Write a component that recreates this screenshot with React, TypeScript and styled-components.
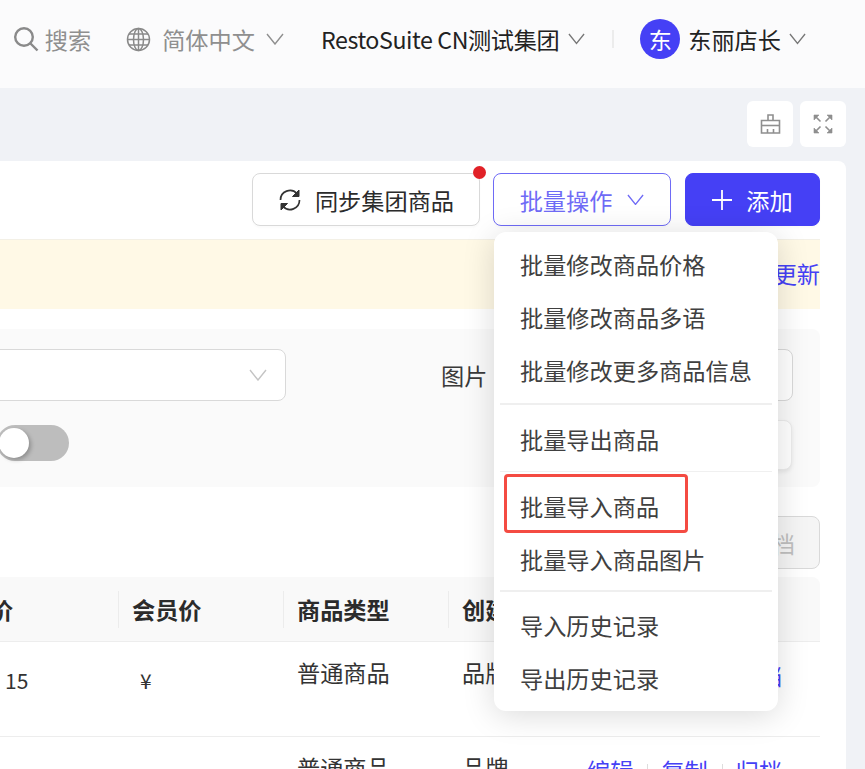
import React from 'react';
import styled, { createGlobalStyle } from 'styled-components';

const GlobalStyle = createGlobalStyle`
  html, body {
    margin: 0;
    padding: 0;
    background: #f0f2f6;
    font-family: "Noto Sans CJK SC", "Liberation Sans", sans-serif;
  }
`;

const Page = styled.div`
  position: relative;
  width: 865px;
  height: 769px;
  overflow: hidden;
  background: #f0f2f6;
`;

const Header = styled.header`
  display: flex;
  align-items: center;
  justify-content: flex-end;
  height: 88px;
  padding: 0 59px 10px 0;
  box-sizing: border-box;
  background: #fbfbfc;
  font-size: 23.2px;
  color: #222;
`;

const HeaderItem = styled.div<{ $muted?: boolean; $gap?: number; $inner?: number }>`
  display: flex;
  align-items: center;
  gap: ${(p) => p.$inner ?? 9}px;
  margin-right: ${(p) => p.$gap ?? 0}px;
  color: ${(p) => (p.$muted ? '#8f8f8f' : '#222')};
  white-space: nowrap;
`;

const GroupName = styled.span`
  letter-spacing: -0.4px;
`;

const HeaderDivider = styled.span`
  width: 2px;
  height: 18px;
  margin-right: 26px;
  background: #ececec;
`;

const Avatar = styled.span`
  display: flex;
  align-items: center;
  justify-content: center;
  width: 40px;
  height: 40px;
  border-radius: 50%;
  background: #4540f5;
  color: #fff;
  font-size: 23.2px;
`;

const ToolStrip = styled.div`
  display: flex;
  justify-content: flex-end;
  gap: 7px;
  height: 73px;
  padding: 13px 19px 0 0;
  box-sizing: border-box;
`;

const ToolButton = styled.button`
  display: flex;
  align-items: center;
  justify-content: center;
  width: 46px;
  height: 46px;
  padding: 0;
  border: none;
  border-radius: 6px;
  background: #fff;
  color: #8f8f8f;
`;

const Card = styled.main`
  width: 846px;
  height: 620px;
  padding-top: 12px;
  box-sizing: border-box;
  background: #fff;
  border-radius: 0 8px 0 0;
`;

const ActionRow = styled.div`
  display: flex;
  justify-content: flex-end;
  gap: 14px;
  height: 53px;
  padding-right: 26px;
`;

const Button = styled.button<{ $variant?: 'default' | 'outline' | 'primary'; $width: number; $gap: number }>`
  position: relative;
  display: flex;
  align-items: center;
  justify-content: center;
  gap: ${(p) => p.$gap}px;
  width: ${(p) => p.$width}px;
  height: 53px;
  padding: 0;
  box-sizing: border-box;
  border-radius: 8px;
  font-family: inherit;
  font-size: 23.2px;
  border: 1px solid
    ${(p) => (p.$variant === 'outline' ? '#6f6bf6' : p.$variant === 'primary' ? '#4540f5' : '#d9d9d9')};
  background: ${(p) => (p.$variant === 'primary' ? '#4540f5' : '#fff')};
  color: ${(p) => (p.$variant === 'outline' ? '#6f6bf6' : p.$variant === 'primary' ? '#fff' : '#2b2b2b')};
  box-shadow: 0 2px 2px rgba(0, 0, 0, 0.02);
  ${(p) => (p.$variant === 'outline' || p.$variant === 'primary' ? '' : 'margin-right: -1px;')}
`;

const RedDot = styled.span`
  position: absolute;
  top: -8px;
  right: -7px;
  width: 13px;
  height: 13px;
  border-radius: 50%;
  background: #e12127;
`;

const Notice = styled.div`
  display: flex;
  align-items: center;
  justify-content: flex-end;
  width: 820px;
  height: 70px;
  margin-top: 13px;
  padding-bottom: 4px;
  box-sizing: border-box;
  border-top: 1px solid #f3f0e6;
  background: #fff9e6;
  color: #4540f5;
  font-size: 23.2px;
`;

const FilterPanel = styled.section`
  display: grid;
  grid-template-columns: 286px 155px 46px 1fr;
  grid-template-rows: 52px 50px;
  row-gap: 19px;
  align-items: center;
  width: 820px;
  height: 158px;
  margin-top: 20px;
  padding: 20px 27px 0 0;
  box-sizing: border-box;
  background: #fafafa;
  border-radius: 0 8px 8px 0;
`;

const SelectBox = styled.div`
  display: flex;
  align-items: center;
  justify-content: flex-end;
  height: 52px;
  margin-left: -10px;
  padding-right: 18px;
  box-sizing: border-box;
  border: 1px solid #d9d9d9;
  border-radius: 8px;
  background: #fff;
  color: #c4c4c4;
`;

const FilterLabel = styled.span`
  grid-column: 3;
  font-size: 23.2px;
  line-height: 32px;
  color: #3a3a3a;
  white-space: nowrap;
`;

const FilterInput = styled.div<{ $raised?: boolean }>`
  grid-column: 4;
  height: ${(p) => (p.$raised ? 50 : 52)}px;
  margin: 0 ${(p) => (p.$raised ? 1 : 0)}px 0 16px;
  box-sizing: border-box;
  border: 1px solid ${(p) => (p.$raised ? '#ececec' : '#d9d9d9')};
  border-radius: 8px;
  background: #fff;
  box-shadow: ${(p) => (p.$raised ? '0 2px 4px rgba(0, 0, 0, 0.08)' : 'none')};
`;

const Toggle = styled.span`
  grid-column: 1;
  position: relative;
  display: block;
  width: 72px;
  height: 36px;
  margin: 0 0 4px -3px;
  border-radius: 18px;
  background: #bdbdbd;
`;

const ToggleKnob = styled.span`
  position: absolute;
  top: 3px;
  left: 2px;
  width: 30px;
  height: 30px;
  border-radius: 50%;
  background: #fff;
  box-shadow: 2px 2px 4px rgba(0, 0, 0, 0.25);
`;

const ArchiveRow = styled.div`
  display: flex;
  justify-content: flex-end;
  width: 820px;
  margin-top: 29px;
`;

const ArchiveButton = styled.button`
  width: 104px;
  height: 53px;
  padding: 0 24px 0 0;
  box-sizing: border-box;
  border: 1px solid #d9d9d9;
  border-radius: 8px;
  background: #f5f5f5;
  color: #bfbfbf;
  font-family: inherit;
  font-size: 23.2px;
  text-align: right;
`;

const Table = styled.div`
  width: 820px;
  margin-top: 8px;
  font-size: 23.2px;
  color: #333;
`;

const TableRow = styled.div<{ $head?: boolean }>`
  display: grid;
  grid-template-columns: 118px 165px 165px 124px 1fr;
  height: ${(p) => (p.$head ? 65 : 95)}px;
  box-sizing: border-box;
  border-bottom: 1px solid #ededed;
  background: ${(p) => (p.$head ? '#f9f9f9' : '#fff')};
  ${(p) => (p.$head ? 'border-radius: 0 8px 0 0; font-weight: 700; color: #2b2b2b;' : '')}
`;

const HeadCell = styled.div<{ $first?: boolean }>`
  align-self: center;
  height: 37px;
  line-height: 37px;
  padding-left: ${(p) => (p.$first ? 0 : 13)}px;
  border-left: ${(p) => (p.$first ? 'none' : '1px solid #ececec')};
  white-space: nowrap;
  overflow: hidden;
`;

const ClippedHead = styled.span`
  display: block;
  margin-left: -10px;
`;

const Cell = styled.div<{ $pad?: number; $offset?: number }>`
  padding: ${(p) => p.$offset ?? 14}px 0 0 ${(p) => p.$pad ?? 14}px;
  line-height: 32px;
  white-space: nowrap;
  overflow: hidden;
`;

const PriceCell = styled(Cell)`
  font-size: 21px;
`;

const Ops = styled.div`
  display: flex;
  align-items: flex-start;
  padding: 17px 0 0 15px;
  line-height: 32px;
  color: #4540f5;
  white-space: nowrap;
`;

const OpLink = styled.span`
  & + &::before {
    content: '';
    display: inline-block;
    width: 1px;
    height: 18px;
    margin: 0 13px 0 14px;
    vertical-align: -2px;
    background: #ddd;
  }
`;

const Menu = styled.ul`
  position: absolute;
  left: 494px;
  top: 232px;
  width: 284px;
  height: 479px;
  margin: 0;
  padding: 6px 6px 0;
  box-sizing: border-box;
  list-style: none;
  background: #fff;
  border-radius: 12px;
  box-shadow: 0 4px 32px rgba(0, 0, 0, 0.15);
`;

const MenuItem = styled.li`
  position: relative;
  height: 53px;
  padding-left: 20px;
  line-height: 53px;
  font-size: 23.2px;
  color: #404040;
  white-space: nowrap;
`;

const MenuDivider = styled.li<{ $thin?: boolean; $before: number; $after: number }>`
  height: ${(p) => (p.$thin ? 1 : 2)}px;
  margin: ${(p) => p.$before}px 0 ${(p) => p.$after}px;
  background: ${(p) => (p.$thin ? '#f0f0f0' : '#efefef')};
`;

const Highlight = styled.span`
  position: absolute;
  left: 4px;
  top: -6px;
  width: 184px;
  height: 59px;
  box-sizing: border-box;
  border: 3px solid #f44b42;
  border-radius: 4px;
`;

const Chevron = ({ size = 18, color = 'currentColor' }: { size?: number; color?: string }) => (
  <svg width={size} height={size * 0.67} viewBox="0 0 18 12" fill="none" stroke={color} strokeWidth="1.4">
    <path d="M1 1l8 10 8-10" />
  </svg>
);

const SearchIcon = () => (
  <svg width="26" height="26" viewBox="0 0 26 26" fill="none" stroke="#8a8a8a" strokeWidth="2.4">
    <circle cx="11" cy="11" r="8.8" />
    <path d="M17.5 17.5l7 7" />
  </svg>
);

const GlobeIcon = () => (
  <svg width="25" height="25" viewBox="0 0 25 25" fill="none" stroke="#8a8a8a" strokeWidth="1.5">
    <circle cx="12.5" cy="12.5" r="11" />
    <ellipse cx="12.5" cy="12.5" rx="5" ry="11" />
    <path d="M12.5 1.5v22M1.5 12.5h22M3 7h19M3 18h19" />
  </svg>
);

const SyncIcon = () => (
  <svg width="24" height="24" viewBox="0 0 24 24" fill="none" stroke="#333" strokeWidth="1.7">
    <path d="M2.5 12A9.5 9.5 0 0 1 19 5.6" />
    <path d="M21.5 12A9.5 9.5 0 0 1 5 18.4" />
    <path d="M21 2v6.5h-6.5z" fill="#333" strokeWidth="1" />
    <path d="M3 22v-6.5h6.5z" fill="#333" strokeWidth="1" />
  </svg>
);

const PlusIcon = () => (
  <svg width="20" height="20" viewBox="0 0 20 20" fill="none" stroke="#fff" strokeWidth="1.8">
    <path d="M10 0v20M0 10h20" />
  </svg>
);

const BroomIcon = () => (
  <svg width="21" height="20" viewBox="0 0 21 20" fill="none" stroke="currentColor" strokeWidth="1.6">
    <path d="M8 6.5V1h5v5.5" />
    <path d="M1.5 6.5h18V19h-18z" />
    <path d="M1.5 11.5h18" />
    <path d="M7.5 19v-4M13.5 19v-4" />
  </svg>
);

const ExpandIcon = () => (
  <svg width="20" height="20" viewBox="0 0 20 20" fill="currentColor" stroke="currentColor" strokeWidth="1.6">
    <path d="M1 1h5l-5 5z" strokeWidth="0.6" />
    <path d="M19 1h-5l5 5z" strokeWidth="0.6" />
    <path d="M1 19h5l-5-5z" strokeWidth="0.6" />
    <path d="M19 19h-5l5-5z" strokeWidth="0.6" />
    <path d="M3 3l4.5 4.5M17 3l-4.5 4.5M3 17l4.5-4.5M17 17l-4.5-4.5" fill="none" />
  </svg>
);

export default function App() {
  return (
    <Page>
      <GlobalStyle />
      <Header>
        <HeaderItem $muted $gap={35} $inner={6}>
          <SearchIcon />
          <span>搜索</span>
        </HeaderItem>
        <HeaderItem $muted $gap={37} $inner={11}>
          <GlobeIcon />
          <span>简体中文</span>
          <Chevron />
        </HeaderItem>
        <HeaderItem $gap={27}>
          <GroupName>RestoSuite CN测试集团</GroupName>
          <Chevron size={17} color="#777" />
        </HeaderItem>
        <HeaderDivider />
        <HeaderItem $inner={8}>
          <Avatar>东</Avatar>
          <span>东丽店长</span>
          <Chevron size={17} color="#777" />
        </HeaderItem>
      </Header>

      <ToolStrip>
        <ToolButton>
          <BroomIcon />
        </ToolButton>
        <ToolButton>
          <ExpandIcon />
        </ToolButton>
      </ToolStrip>

      <Card>
        <ActionRow>
          <Button $width={228} $gap={13}>
            <SyncIcon />
            同步集团商品
            <RedDot />
          </Button>
          <Button $variant="outline" $width={178} $gap={15}>
            批量操作
            <Chevron size={17} />
          </Button>
          <Button $variant="primary" $width={135} $gap={14}>
            <PlusIcon />
            添加
          </Button>
        </ActionRow>

        <Notice>更新</Notice>

        <FilterPanel>
          <SelectBox>
            <Chevron />
          </SelectBox>
          <span />
          <FilterLabel>图片</FilterLabel>
          <FilterInput />
          <Toggle>
            <ToggleKnob />
          </Toggle>
          <FilterInput $raised />
        </FilterPanel>

        <ArchiveRow>
          <ArchiveButton>归档</ArchiveButton>
        </ArchiveRow>

        <Table>
          <TableRow $head>
            <HeadCell $first>
              <ClippedHead>价</ClippedHead>
            </HeadCell>
            <HeadCell>会员价</HeadCell>
            <HeadCell>商品类型</HeadCell>
            <HeadCell>创建方式</HeadCell>
            <span />
          </TableRow>
          <TableRow>
            <PriceCell $pad={5} $offset={22}>15</PriceCell>
            <PriceCell $pad={22} $offset={22}>¥</PriceCell>
            <Cell>普通商品</Cell>
            <Cell>品牌</Cell>
            <Ops>
              <OpLink>编辑</OpLink>
              <OpLink>复制</OpLink>
              <OpLink>归档</OpLink>
            </Ops>
          </TableRow>
          <TableRow>
            <span />
            <span />
            <Cell>普通商品</Cell>
            <Cell>品牌</Cell>
            <Ops>
              <OpLink>编辑</OpLink>
              <OpLink>复制</OpLink>
              <OpLink>归档</OpLink>
            </Ops>
          </TableRow>
        </Table>
      </Card>

      <Menu>
        <MenuItem>批量修改商品价格</MenuItem>
        <MenuItem>批量修改商品多语</MenuItem>
        <MenuItem>批量修改更多商品信息</MenuItem>
        <MenuDivider $before={6} $after={8} />
        <MenuItem>批量导出商品</MenuItem>
        <MenuDivider $thin $before={5} $after={8} />
        <MenuItem>
          批量导入商品
          <Highlight />
        </MenuItem>
        <MenuItem>批量导入商品图片</MenuItem>
        <MenuDivider $before={4} $after={7} />
        <MenuItem>导入历史记录</MenuItem>
        <MenuItem>导出历史记录</MenuItem>
      </Menu>
    </Page>
  );
}
